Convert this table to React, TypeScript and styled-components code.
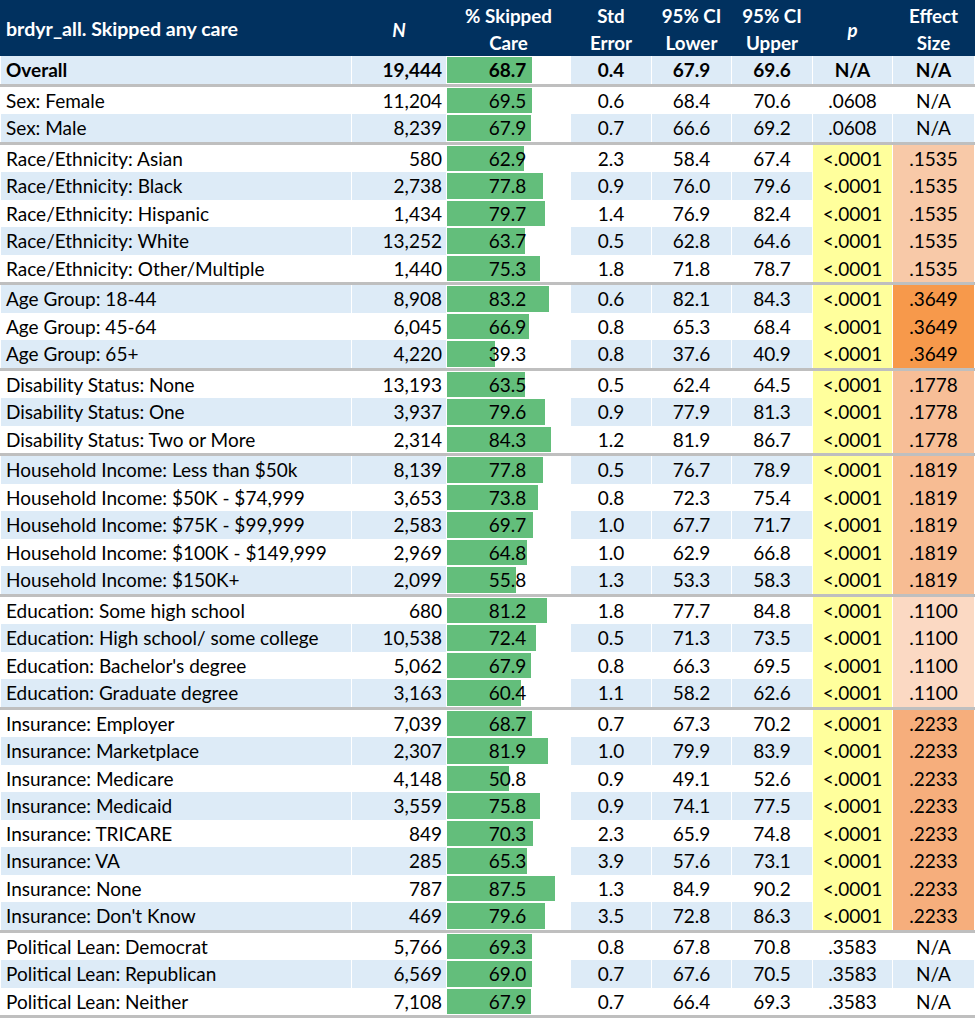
import styled, { createGlobalStyle } from "styled-components";

const GlobalStyle = createGlobalStyle`
  html, body {
    margin: 0;
    padding: 0;
    background: #ffffff;
  }
  body {
    font-family: "Lato", "Liberation Sans", sans-serif;
    color: #000000;
  }
`;

type Row = {
  label: string;
  n: string;
  pct: number;
  se: string;
  lo: string;
  hi: string;
  p: string;
  effect: string;
};

const groups: Row[][] = [
  [
    { label: "Sex: Female", n: "11,204", pct: 69.5, se: "0.6", lo: "68.4", hi: "70.6", p: ".0608", effect: "N/A" },
    { label: "Sex: Male", n: "8,239", pct: 67.9, se: "0.7", lo: "66.6", hi: "69.2", p: ".0608", effect: "N/A" },
  ],
  [
    { label: "Race/Ethnicity: Asian", n: "580", pct: 62.9, se: "2.3", lo: "58.4", hi: "67.4", p: "<.0001", effect: ".1535" },
    { label: "Race/Ethnicity: Black", n: "2,738", pct: 77.8, se: "0.9", lo: "76.0", hi: "79.6", p: "<.0001", effect: ".1535" },
    { label: "Race/Ethnicity: Hispanic", n: "1,434", pct: 79.7, se: "1.4", lo: "76.9", hi: "82.4", p: "<.0001", effect: ".1535" },
    { label: "Race/Ethnicity: White", n: "13,252", pct: 63.7, se: "0.5", lo: "62.8", hi: "64.6", p: "<.0001", effect: ".1535" },
    { label: "Race/Ethnicity: Other/Multiple", n: "1,440", pct: 75.3, se: "1.8", lo: "71.8", hi: "78.7", p: "<.0001", effect: ".1535" },
  ],
  [
    { label: "Age Group: 18-44", n: "8,908", pct: 83.2, se: "0.6", lo: "82.1", hi: "84.3", p: "<.0001", effect: ".3649" },
    { label: "Age Group: 45-64", n: "6,045", pct: 66.9, se: "0.8", lo: "65.3", hi: "68.4", p: "<.0001", effect: ".3649" },
    { label: "Age Group: 65+", n: "4,220", pct: 39.3, se: "0.8", lo: "37.6", hi: "40.9", p: "<.0001", effect: ".3649" },
  ],
  [
    { label: "Disability Status: None", n: "13,193", pct: 63.5, se: "0.5", lo: "62.4", hi: "64.5", p: "<.0001", effect: ".1778" },
    { label: "Disability Status: One", n: "3,937", pct: 79.6, se: "0.9", lo: "77.9", hi: "81.3", p: "<.0001", effect: ".1778" },
    { label: "Disability Status: Two or More", n: "2,314", pct: 84.3, se: "1.2", lo: "81.9", hi: "86.7", p: "<.0001", effect: ".1778" },
  ],
  [
    { label: "Household Income: Less than $50k", n: "8,139", pct: 77.8, se: "0.5", lo: "76.7", hi: "78.9", p: "<.0001", effect: ".1819" },
    { label: "Household Income: $50K - $74,999", n: "3,653", pct: 73.8, se: "0.8", lo: "72.3", hi: "75.4", p: "<.0001", effect: ".1819" },
    { label: "Household Income: $75K - $99,999", n: "2,583", pct: 69.7, se: "1.0", lo: "67.7", hi: "71.7", p: "<.0001", effect: ".1819" },
    { label: "Household Income: $100K - $149,999", n: "2,969", pct: 64.8, se: "1.0", lo: "62.9", hi: "66.8", p: "<.0001", effect: ".1819" },
    { label: "Household Income: $150K+", n: "2,099", pct: 55.8, se: "1.3", lo: "53.3", hi: "58.3", p: "<.0001", effect: ".1819" },
  ],
  [
    { label: "Education: Some high school", n: "680", pct: 81.2, se: "1.8", lo: "77.7", hi: "84.8", p: "<.0001", effect: ".1100" },
    { label: "Education: High school/ some college", n: "10,538", pct: 72.4, se: "0.5", lo: "71.3", hi: "73.5", p: "<.0001", effect: ".1100" },
    { label: "Education: Bachelor's degree", n: "5,062", pct: 67.9, se: "0.8", lo: "66.3", hi: "69.5", p: "<.0001", effect: ".1100" },
    { label: "Education: Graduate degree", n: "3,163", pct: 60.4, se: "1.1", lo: "58.2", hi: "62.6", p: "<.0001", effect: ".1100" },
  ],
  [
    { label: "Insurance: Employer", n: "7,039", pct: 68.7, se: "0.7", lo: "67.3", hi: "70.2", p: "<.0001", effect: ".2233" },
    { label: "Insurance: Marketplace", n: "2,307", pct: 81.9, se: "1.0", lo: "79.9", hi: "83.9", p: "<.0001", effect: ".2233" },
    { label: "Insurance: Medicare", n: "4,148", pct: 50.8, se: "0.9", lo: "49.1", hi: "52.6", p: "<.0001", effect: ".2233" },
    { label: "Insurance: Medicaid", n: "3,559", pct: 75.8, se: "0.9", lo: "74.1", hi: "77.5", p: "<.0001", effect: ".2233" },
    { label: "Insurance: TRICARE", n: "849", pct: 70.3, se: "2.3", lo: "65.9", hi: "74.8", p: "<.0001", effect: ".2233" },
    { label: "Insurance: VA", n: "285", pct: 65.3, se: "3.9", lo: "57.6", hi: "73.1", p: "<.0001", effect: ".2233" },
    { label: "Insurance: None", n: "787", pct: 87.5, se: "1.3", lo: "84.9", hi: "90.2", p: "<.0001", effect: ".2233" },
    { label: "Insurance: Don't Know", n: "469", pct: 79.6, se: "3.5", lo: "72.8", hi: "86.3", p: "<.0001", effect: ".2233" },
  ],
  [
    { label: "Political Lean: Democrat", n: "5,766", pct: 69.3, se: "0.8", lo: "67.8", hi: "70.8", p: ".3583", effect: "N/A" },
    { label: "Political Lean: Republican", n: "6,569", pct: 69.0, se: "0.7", lo: "67.6", hi: "70.5", p: ".3583", effect: "N/A" },
    { label: "Political Lean: Neither", n: "7,108", pct: 67.9, se: "0.7", lo: "66.4", hi: "69.3", p: ".3583", effect: "N/A" },
  ],
];

const overall: Row = { label: "Overall", n: "19,444", pct: 68.7, se: "0.4", lo: "67.9", hi: "69.6", p: "N/A", effect: "N/A" };

const STRIPE = "#ddebf7";
const YELLOW = "#ffff9c";

const effectColors: Record<string, string> = {
  ".1100": "#fbd9c3",
  ".1535": "#f8c9a8",
  ".1778": "#f7be97",
  ".1819": "#f7bc93",
  ".2233": "#f6ae7c",
  ".3649": "#f7994b",
};

const COLUMNS = "350px 94px 123px 80px 79px 80px 79px 81px";

function Table() {
  let index = 0;

  const renderRow = (row: Row, bold = false) => {
    const striped = index % 2 === 0;
    index += 1;
    const base = striped ? STRIPE : "#ffffff";
    const pBg = row.p === "<.0001" ? YELLOW : base;
    const effectBg = effectColors[row.effect] ?? base;

    return (
      <DataRow key={row.label} $bold={bold}>
        <Cell $bg={base} $align="left">{row.label}</Cell>
        <Cell $bg={base} $align="right">{row.n}</Cell>
        <BarCell>
          <Bar style={{ width: `${row.pct}%` }} />
          <BarValue>{row.pct.toFixed(1)}</BarValue>
        </BarCell>
        <Cell $bg={base}>{row.se}</Cell>
        <Cell $bg={base}>{row.lo}</Cell>
        <Cell $bg={base}>{row.hi}</Cell>
        <Cell $bg={pBg}>{row.p}</Cell>
        <Cell $bg={effectBg}>{row.effect}</Cell>
      </DataRow>
    );
  };

  return (
    <Sheet>
      <HeaderRow>
        <HeadTitle>brdyr_all. Skipped any care</HeadTitle>
        <HeadCell><em>N</em></HeadCell>
        <HeadCell>% Skipped<br />Care</HeadCell>
        <HeadCell>Std<br />Error</HeadCell>
        <HeadCell>95% CI<br />Lower</HeadCell>
        <HeadCell>95% CI<br />Upper</HeadCell>
        <HeadCell><em>p</em></HeadCell>
        <HeadCell>Effect<br />Size</HeadCell>
      </HeaderRow>
      <Group>{renderRow(overall, true)}</Group>
      {groups.map((group, gi) => (
        <Group key={gi}>{group.map((row) => renderRow(row))}</Group>
      ))}
    </Sheet>
  );
}

export default function App() {
  return (
    <>
      <GlobalStyle />
      <Table />
    </>
  );
}

const Sheet = styled.div`
  width: 975px;
  display: flex;
  flex-direction: column;
`;

const HeaderRow = styled.div`
  display: grid;
  grid-template-columns: ${COLUMNS};
  column-gap: 1px;
  height: 56px;
  padding: 0 1px;
  background-color: #01315f;
  color: #ffffff;
  font-weight: 700;
  font-size: 18.8px;
`;

const HeadTitle = styled.div`
  display: flex;
  align-items: center;
  padding-left: 5px;
  font-size: 19.6px;
  white-space: nowrap;
`;

const HeadCell = styled.div`
  display: flex;
  align-items: center;
  justify-content: center;
  text-align: center;
  line-height: 27px;
  padding-top: 2px;

  em {
    font-style: italic;
  }
`;

const Group = styled.div`
  display: flex;
  flex-direction: column;
  border-bottom: 3px solid #bfbfbf;
`;

const DataRow = styled.div<{ $bold: boolean }>`
  display: grid;
  grid-template-columns: ${COLUMNS};
  column-gap: 1px;
  height: 27.5px;
  padding: 0 1px;
  background-color: #ffffff;
  font-size: 19px;
  font-weight: ${(p) => (p.$bold ? 700 : 400)};
`;

const Cell = styled.div<{ $bg: string; $align?: "left" | "right" | "center" }>`
  display: flex;
  align-items: center;
  justify-content: ${(p) =>
    p.$align === "left" ? "flex-start" : p.$align === "right" ? "flex-end" : "center"};
  padding: ${(p) => (p.$align === "left" ? "0 0 0 5px" : p.$align === "right" ? "0 4px 0 0" : "0")};
  background-color: ${(p) => p.$bg};
  white-space: nowrap;
  overflow: hidden;
`;

const BarCell = styled.div`
  position: relative;
  display: flex;
  align-items: center;
  justify-content: center;
  padding: 1px 2px 1px 0;
  background-color: #ffffff;
`;

const Bar = styled.div`
  position: absolute;
  left: 0;
  top: 1px;
  bottom: 1px;
  background-color: #63be7b;
`;

const BarValue = styled.span`
  position: relative;
`;
